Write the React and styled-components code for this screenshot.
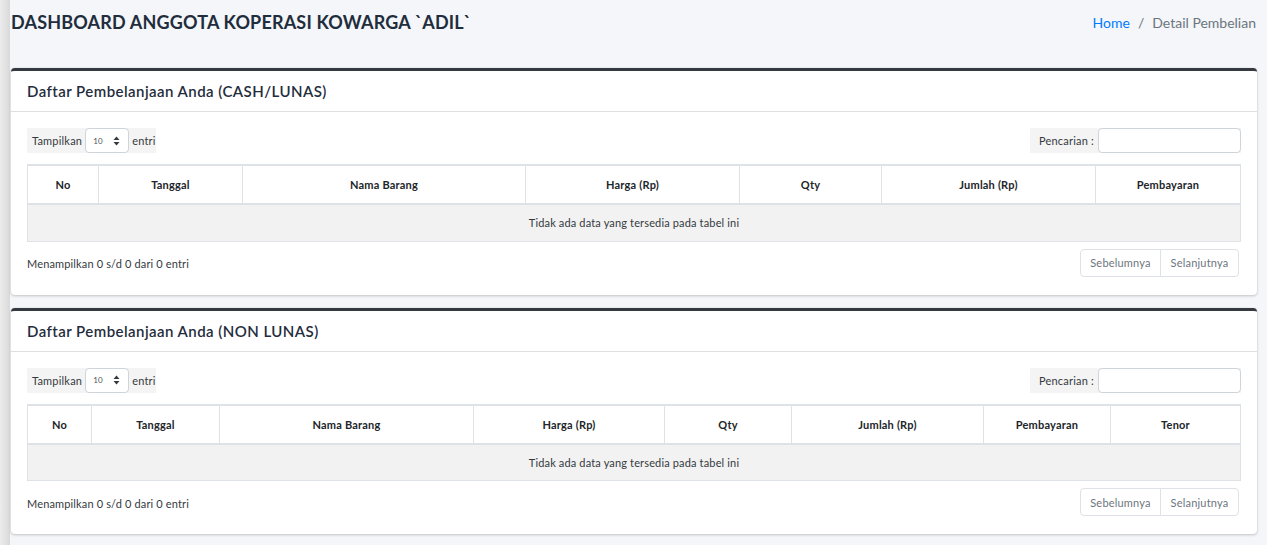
import React from 'react';
import styled, { createGlobalStyle } from 'styled-components';

const GlobalStyle = createGlobalStyle`
  html, body {
    margin: 0;
    padding: 0;
    background: #f4f6f9;
    font-family: "Lato", "Noto Sans", sans-serif;
    color: #212529;
  }
  * { box-sizing: border-box; }
`;

const Page = styled.div`
  display: flex;
  min-height: 545px;
`;

const SideEdge = styled.div`
  width: 10px;
  flex-shrink: 0;
  background: linear-gradient(to right, #ececec, #d9d9d9);
`;

const Main = styled.main`
  flex: 1;
  padding: 0 11px 0 1px;
`;

const ContentHeader = styled.div`
  display: flex;
  justify-content: space-between;
  align-items: center;
  padding: 11px 1px 35px 0;
`;

const PageTitle = styled.h1`
  margin: 0;
  font-size: 18px;
  line-height: 22px;
  font-weight: 700;
  letter-spacing: 0.17px;
  color: #1f2d3d;
`;

const Breadcrumb = styled.ol`
  display: flex;
  gap: 8px;
  margin: 0;
  padding: 0;
  list-style: none;
  font-size: 14px;
  color: #6c757d;
`;

const Crumb = styled.li`
  color: ${p => (p.$link ? '#007bff' : '#6c757d')};
`;

const Card = styled.section`
  background: #fff;
  border-top: 3px solid #343a40;
  border-radius: 4px;
  box-shadow: 0 0 1px rgba(0, 0, 0, 0.125), 0 1px 3px rgba(0, 0, 0, 0.2);
  margin-bottom: 13px;
`;

const CardHeader = styled.div`
  padding: 12px 16px;
  border-bottom: 1px solid rgba(0, 0, 0, 0.125);
`;

const CardTitle = styled.h3`
  margin: 0;
  font-size: 15px;
  line-height: 16px;
  font-weight: 600;
  letter-spacing: 0.45px;
  color: #1f2d3d;
`;

const CardBody = styled.div`
  padding: 16px 16px 18px 16px;
`;

const Controls = styled.div`
  display: flex;
  justify-content: space-between;
  align-items: center;
  margin-bottom: 11px;
`;

const ControlLabel = styled.label`
  display: flex;
  align-items: center;
  gap: 3px;
  height: 25px;
  padding-left: ${p => (p.$wide ? 9 : 5)}px;
  background: #f4f4f4;
  font-size: 11px;
  letter-spacing: 0.2px;
  color: #343a40;
`;

const SelectBox = styled.div`
  display: flex;
  align-items: center;
  justify-content: space-between;
  width: 44px;
  height: 25px;
  padding: 0 8px 0 7px;
  border: 1px solid #ced4da;
  border-radius: 4px;
  background: #fff;
  font-size: 8px;
  color: #495057;
`;

const SearchInput = styled.div`
  width: 143px;
  height: 25px;
  margin-left: 1px;
  border: 1px solid #ced4da;
  border-radius: 4px;
  background: #fff;
`;

const Table = styled.table`
  width: 100%;
  border-collapse: collapse;
  table-layout: fixed;
  border: 1px solid #dee2e6;
  font-size: 11px;
`;

const Th = styled.th`
  height: 39px;
  padding: 0 8px;
  border: 1px solid #dee2e6;
  border-top-width: 2px;
  border-bottom-width: 2px;
  text-align: center;
  font-weight: 700;
  letter-spacing: 0.2px;
  color: #212529;
`;

const EmptyCell = styled.td`
  height: 37px;
  background: #f2f2f2;
  text-align: center;
  letter-spacing: 0.15px;
  color: #343a40;
  border: 1px solid #dee2e6;
`;

const Footer = styled.div`
  display: flex;
  justify-content: space-between;
  align-items: center;
  margin-top: 7px;
`;

const Info = styled.div`
  font-size: 11px;
  letter-spacing: 0.15px;
  padding-top: 2px;
  color: #343a40;
`;

const Pager = styled.div`
  display: flex;
  margin-right: 2px;
`;

const PageButton = styled.button`
  height: 28px;
  width: ${p => p.$w}px;
  padding: 0;
  font-family: inherit;
  font-size: 11px;
  letter-spacing: 0.2px;
  color: #6c757d;
  background: #fff;
  border: 1px solid #dee2e6;
  margin-left: -1px;
  border-radius: ${p => (p.$first ? '4px 0 0 4px' : '0 4px 4px 0')};
`;

function SortArrows() {
  return (
    <svg width="7" height="10" viewBox="0 0 7 10">
      <path d="M3.5 0.5 L6.5 4 H0.5 Z" fill="#343a40" />
      <path d="M3.5 9.5 L6.5 6 H0.5 Z" fill="#343a40" />
    </svg>
  );
}

function DataCard({ title, columns }) {
  return (
    <Card>
      <CardHeader>
        <CardTitle>{title}</CardTitle>
      </CardHeader>
      <CardBody>
        <Controls>
          <ControlLabel>
            Tampilkan
            <SelectBox>
              <span>10</span>
              <SortArrows />
            </SelectBox>
            entri
          </ControlLabel>
          <ControlLabel $wide>
            Pencarian :
            <SearchInput />
          </ControlLabel>
        </Controls>
        <Table>
          <colgroup>
            {columns.map(c => (
              <col key={c.name} style={{ width: c.w }} />
            ))}
          </colgroup>
          <thead>
            <tr>
              {columns.map(c => (
                <Th key={c.name}>{c.name}</Th>
              ))}
            </tr>
          </thead>
          <tbody>
            <tr>
              <EmptyCell colSpan={columns.length}>Tidak ada data yang tersedia pada tabel ini</EmptyCell>
            </tr>
          </tbody>
        </Table>
        <Footer>
          <Info>Menampilkan 0 s/d 0 dari 0 entri</Info>
          <Pager>
            <PageButton $first $w={81}>Sebelumnya</PageButton>
            <PageButton $w={79}>Selanjutnya</PageButton>
          </Pager>
        </Footer>
      </CardBody>
    </Card>
  );
}

const lunasColumns = [
  { name: 'No', w: 71 },
  { name: 'Tanggal', w: 144 },
  { name: 'Nama Barang', w: 283 },
  { name: 'Harga (Rp)', w: 214 },
  { name: 'Qty', w: 142 },
  { name: 'Jumlah (Rp)', w: 214 },
  { name: 'Pembayaran', w: 145 },
];

const nonLunasColumns = [
  { name: 'No', w: 64 },
  { name: 'Tanggal', w: 128 },
  { name: 'Nama Barang', w: 254 },
  { name: 'Harga (Rp)', w: 191 },
  { name: 'Qty', w: 127 },
  { name: 'Jumlah (Rp)', w: 192 },
  { name: 'Pembayaran', w: 127 },
  { name: 'Tenor', w: 130 },
];

export default function App() {
  return (
    <>
      <GlobalStyle />
      <Page>
        <SideEdge />
        <Main>
          <ContentHeader>
            <PageTitle>DASHBOARD ANGGOTA KOPERASI KOWARGA `ADIL`</PageTitle>
            <Breadcrumb>
              <Crumb $link>Home</Crumb>
              <Crumb>/</Crumb>
              <Crumb>Detail Pembelian</Crumb>
            </Breadcrumb>
          </ContentHeader>
          <DataCard title="Daftar Pembelanjaan Anda (CASH/LUNAS)" columns={lunasColumns} />
          <DataCard title="Daftar Pembelanjaan Anda (NON LUNAS)" columns={nonLunasColumns} />
        </Main>
      </Page>
    </>
  );
}
